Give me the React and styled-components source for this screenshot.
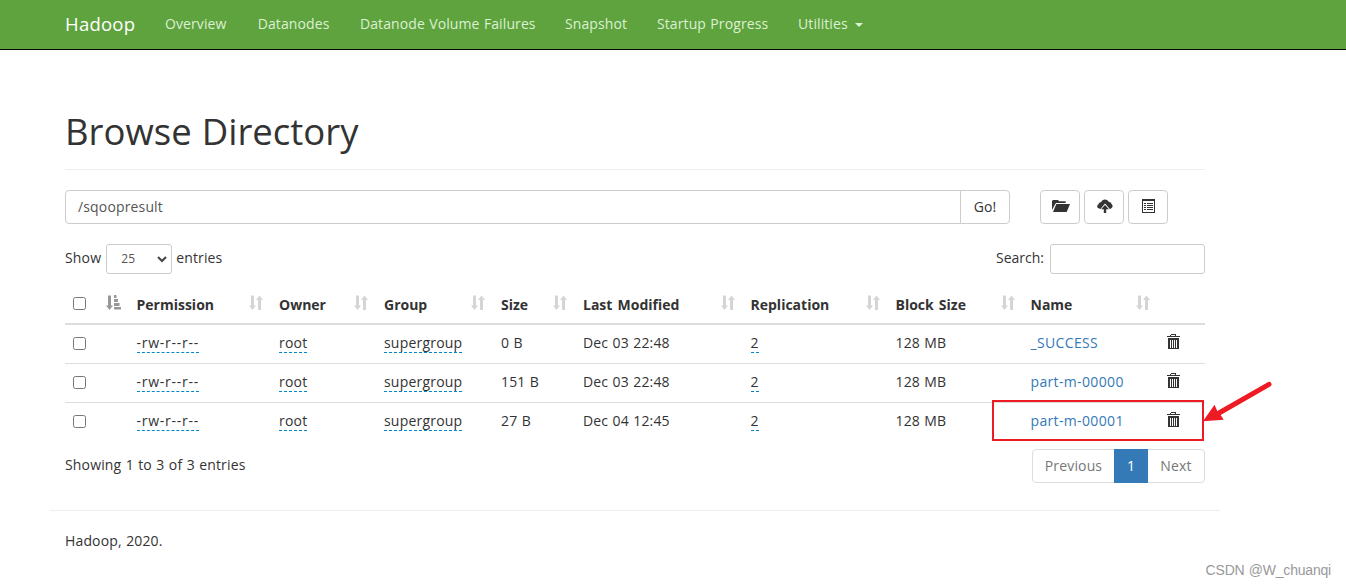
import React from 'react'
import styled, { createGlobalStyle } from 'styled-components'

const links = [
  { label: 'Overview', width: 62.7 },
  { label: 'Datanodes', width: 72.3 },
  { label: 'Datanode Volume Failures', width: 175 },
  { label: 'Snapshot', width: 62 },
  { label: 'Startup Progress', width: 111 },
]

const headings = ['Permission', 'Owner', 'Group', 'Size', 'Last Modified', 'Replication', 'Block Size', 'Name']

const files = [
  { size: '0 B', modified: 'Dec 03 22:48', name: '_SUCCESS' },
  { size: '151 B', modified: 'Dec 03 22:48', name: 'part-m-00000' },
  { size: '27 B', modified: 'Dec 04 12:45', name: 'part-m-00001' },
]

const FolderIcon = () => (
  <svg width="18" height="14" viewBox="0 0 18 14" fill="#333">
    <path d="M0 11V2l1-1h5l1 1.3h6.600V4H4.200L3.200 5z" />
    <path d="M4.300 5H18l-3.300 8H1z" />
  </svg>
)

const UploadIcon = () => (
  <svg width="16" height="14" viewBox="0 0 16 14" fill="#333">
    <path d="M3.400 10 1.500 9.200C.6 8.800.2 8 .2 7.200c0-1 .6-1.700 1.500-2C1.700 3.700 3 3 4 3.300 4.700 1.400 6.200.4 8 .4c1.700 0 3.200 1 3.900 2.500 1.700 0 2.700 1 2.700 2.300.7.400 1 .9 1 1.700 0 1.300-1 2.500-2.700 3L8 4.600z" />
    <path d="M8 6l4 4.200H9.200V14H6.800v-3.800H4z" />
  </svg>
)

const ListIcon = () => (
  <svg width="14" height="14" viewBox="0 0 14 14" shapeRendering="crispEdges">
    <path fill="#333" fillRule="evenodd" d="M0 0h13v14H0zM1 2v11h11V2z" />
    <path fill="#333" d="M2 4h2v1H2zM5 4h6v1H5zM2 6h2v1H2zM5 6h6v1H5zM2 8h2v1H2zM5 8h6v1H5zM2 10h2v1H2zM5 10h6v1H5z" />
  </svg>
)

const SortIcon = () => (
  <svg width="14" height="15" viewBox="0 0 14 15" fill="#333" opacity=".2">
    <path d="M2 .5h3v10h2L3.500 15 0 10.500h2zM9 15h3V5h2L10.500.5 7 5h2z" />
  </svg>
)

const SortAscIcon = () => (
  <svg width="15" height="15" viewBox="0 0 15 15" fill="#333" opacity=".5">
    <path d="M2 .5h3v10h2L3.500 15 0 10.500h2zM8 0h2.500v3H8zM8 4h4v3H8zM8 8h5.500v3H8zM8 12h7v2.500H8z" />
  </svg>
)

const TrashIcon = () => (
  <svg width="13" height="16" viewBox="0 0 13 16" shapeRendering="crispEdges">
    <path fill="#333" fillRule="evenodd" d="M4 0h5v2h4v1H0V2h3V1h1zM4 1v1h4V1zM1 4h11v11H1zM3 6v8h1V6zM5 6v8h1V6zM7 6v8h1V6zM9 6v8h1V6z" />
  </svg>
)

const App = () => {
  return (
    <>
      <GlobalStyle />
      <Navbar>
        <Brand>Hadoop</Brand>
        {links.map((link) => (
          <NavLink key={link.label} $width={link.width}>{link.label}</NavLink>
        ))}
        <NavLink $width={65}>Utilities<Caret /></NavLink>
      </Navbar>
      <Container>
        <Title>Browse Directory</Title>
        <PathRow>
          <PathInput defaultValue="/sqoopresult" />
          <GoButton>Go!</GoButton>
          <Tools>
            <ToolButton><FolderIcon /></ToolButton>
            <ToolButton><UploadIcon /></ToolButton>
            <ToolButton><ListIcon /></ToolButton>
          </Tools>
        </PathRow>
        <FilterRow>
          <span>Show</span>
          <Length>
            25
            <svg width="10" height="7" viewBox="0 0 10 7" fill="none" stroke="#444" strokeWidth="2">
              <path d="M1 1l4 4 4-4" />
            </svg>
          </Length>
          <span>entries</span>
          <SearchLabel>Search:</SearchLabel>
          <SearchInput />
        </FilterRow>
        <HeadRow>
          <HeadCell>
            <Checkbox type="checkbox" />
            <SortAscIcon />
          </HeadCell>
          {headings.map((heading) => (
            <HeadCell key={heading}>{heading}<SortIcon /></HeadCell>
          ))}
        </HeadRow>
        {files.map((file) => (
          <Row key={file.name}>
            <Cell><Checkbox type="checkbox" $top={4} /></Cell>
            <Cell><Editable $spacing={0.75}>-rw-r--r--</Editable></Cell>
            <Cell><Editable>root</Editable></Cell>
            <Cell><Editable>supergroup</Editable></Cell>
            <Cell>{file.size}</Cell>
            <Cell>{file.modified}</Cell>
            <Cell><Editable>2</Editable></Cell>
            <Cell>128 MB</Cell>
            <Cell><FileLink>{file.name}</FileLink></Cell>
            <ActionCell><TrashIcon /></ActionCell>
          </Row>
        ))}
        <TableFooter>
          <Info>Showing 1 to 3 of 3 entries</Info>
          <Pagination>
            <Page $width={81}>Previous</Page>
            <Page $width={34} $active>1</Page>
            <Page $width={56}>Next</Page>
          </Pagination>
        </TableFooter>
      </Container>
      <Footer>Hadoop, 2020.</Footer>
      <Highlight />
      <Arrow width="76" height="48" viewBox="0 0 76 48">
        <path d="M68 6.300L18 35" stroke="#ed1c24" strokeWidth="5" strokeLinecap="round" />
        <path d="M2 43.300L13.500 26.700 16.500 33.500 20 37.500 22.700 41.700z" fill="#ed1c24" />
      </Arrow>
      <Watermark>CSDN @W_chuanqi</Watermark>
    </>
  )
}

export default App

const GlobalStyle = createGlobalStyle`
  * {
    box-sizing: border-box;
  }
  body {
    margin: 0;
    height: 587px;
    position: relative;
    overflow: hidden;
    background: #fff;
    color: #333;
    font: 14px/20px 'Open Sans', 'Noto Sans', sans-serif;
    letter-spacing: 0.15px;
    word-spacing: 0.6px;
  }
  svg {
    display: block;
    flex: none;
  }
`

const Navbar = styled.nav`
  display: flex;
  height: 50px;
  padding: 0 65px;
  gap: 30px;
  line-height: 47px;
  background: #5fa33e;
  border-bottom: 1px solid #080808;
`

const Brand = styled.a`
  width: 70px;
  color: #fff;
  font-size: 18.5px;
  letter-spacing: 0.25px;
  line-height: 48px;
  white-space: nowrap;
`

const NavLink = styled.a`
  display: flex;
  align-items: center;
  width: ${({ $width }) => $width}px;
  height: 47px;
  color: #dcf0d3;
  letter-spacing: 0.1px;
  white-space: nowrap;
`

const Caret = styled.span`
  margin: 3px 0 0 7px;
  border: 4px solid transparent;
  border-top-color: #dcf0d3;
  border-bottom: 0;
`

const Container = styled.main`
  width: 1140px;
  margin: 0 auto 0 65px;
`

const Title = styled.h1`
  height: 120px;
  margin: 0 0 20px;
  padding-top: 61px;
  font-size: 36.5px;
  font-weight: 400;
  letter-spacing: 0;
  line-height: 40px;
  border-bottom: 1px solid #eee;
`

const PathRow = styled.div`
  display: flex;
  height: 34px;
`

const PathInput = styled.input`
  width: 896px;
  padding: 0 12px;
  font: inherit;
  letter-spacing: inherit;
  color: #555;
  border: 1px solid #ccc;
  border-radius: 4px 0 0 4px;
`

const GoButton = styled.button`
  width: 50px;
  margin-left: -1px;
  padding: 0;
  font: inherit;
  letter-spacing: inherit;
  color: #333;
  background: #fff;
  border: 1px solid #ccc;
  border-radius: 0 4px 4px 0;
`

const Tools = styled.div`
  display: flex;
  gap: 4px;
  margin-left: 30px;
`

const ToolButton = styled.button`
  display: flex;
  align-items: center;
  justify-content: center;
  width: 40px;
  height: 34px;
  padding: 0 0 2px 2px;
  background: #fff;
  border: 1px solid #ccc;
  border-radius: 4px;
`

const FilterRow = styled.div`
  display: flex;
  height: 30px;
  margin-top: 20px;
  line-height: 28px;
`

const Length = styled.div`
  display: flex;
  align-items: center;
  justify-content: space-between;
  width: 66px;
  margin: 0 4px 0 5px;
  padding: 0 4px 0 14px;
  font-size: 12px;
  color: #555;
  border: 1px solid #ccc;
  border-radius: 3px;
`

const SearchLabel = styled.label`
  margin-left: auto;
  letter-spacing: 0;
`

const SearchInput = styled.input`
  width: 155px;
  margin-left: 6px;
  border: 1px solid #ccc;
  border-radius: 3px;
`

const Row = styled.div`
  display: grid;
  grid-template-columns: 63.5px 142.500px 105px 117px 82px 167.500px 145px 135px 135.500px 47px;
  height: 39px;
  border-top: 1px solid #ddd;

  &:nth-of-type(4) {
    height: 38px;
    border-top: 0;
  }
`

const HeadRow = styled(Row)`
  height: 51px;
  padding-top: 13px;
  border-top: 0;
  border-bottom: 2px solid #ddd;
`

const Cell = styled.div`
  display: flex;
  align-items: flex-start;
  padding: 8px 0 0 8px;
  white-space: nowrap;
`

const ActionCell = styled(Cell)`
  padding: 9px 0 0 9px;
`

const HeadCell = styled(Cell)`
  justify-content: space-between;
  padding-right: 8px;
  font-weight: 700;
  letter-spacing: 0;
  word-spacing: 1.5px;
`

const Checkbox = styled.input`
  width: 13px;
  height: 13px;
  margin: ${({ $top = 2 }) => $top}px 0 0;
`

const Editable = styled.span`
  height: 21px;
  margin-top: -1px;
  line-height: 22px;
  letter-spacing: ${({ $spacing = 0.2 }) => $spacing}px;
  border-bottom: 1px dashed #0088cc;
`

const FileLink = styled.a`
  color: #337ab7;
  letter-spacing: 0.35px;
`

const TableFooter = styled.div`
  display: flex;
  justify-content: space-between;
  height: 69px;
  padding-top: 8px;
`

const Info = styled.div`
  padding-top: 6px;
`

const Pagination = styled.div`
  display: flex;
  height: 34px;
  border: 1px solid #ddd;
  border-radius: 4px;
`

const Page = styled.a`
  width: ${({ $width }) => $width}px;
  height: 34px;
  margin: -1px 0;
  line-height: 34px;
  text-align: center;
  color: ${({ $active }) => ($active ? '#fff' : '#777')};
  background: ${({ $active }) => ($active ? '#337ab7' : 'none')};
`

const Footer = styled.footer`
  width: 1170px;
  margin-left: 50px;
  padding: 20px 15px;
  border-top: 1px solid #eee;
`

// Annotation drawn over the last row
const Highlight = styled.div`
  position: absolute;
  left: 992px;
  top: 400px;
  width: 212px;
  height: 41px;
  border: 2px solid #ed1c24;
`

const Arrow = styled.svg`
  position: absolute;
  left: 1201px;
  top: 378px;
`

const Watermark = styled.div`
  position: absolute;
  right: 15px;
  bottom: 7px;
  color: #999;
  font: 14px/20px 'Liberation Sans', sans-serif;
  letter-spacing: -0.2px;
`
